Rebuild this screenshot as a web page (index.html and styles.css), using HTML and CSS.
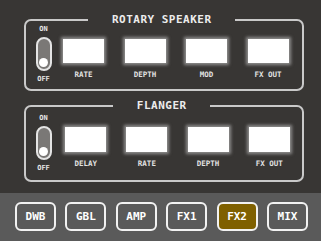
FILE: index.html
```html
<!DOCTYPE html>
<html>
<head>
<meta charset="utf-8">
<link rel="stylesheet" href="styles.css">
</head>
<body>
<div class="app">
  <main class="fx">
    <fieldset class="panel">
      <legend class="title">ROTARY SPEAKER</legend>
      <div class="row">
        <div class="switch">
          <span class="sw-label">ON</span>
          <div class="pill"><i class="knob"></i></div>
          <span class="sw-label">OFF</span>
        </div>
        <div class="ctl"><div class="lcd"></div><span class="lbl">RATE</span></div>
        <div class="ctl"><div class="lcd"></div><span class="lbl">DEPTH</span></div>
        <div class="ctl"><div class="lcd"></div><span class="lbl">MOD</span></div>
        <div class="ctl"><div class="lcd"></div><span class="lbl">FX OUT</span></div>
      </div>
    </fieldset>
    <fieldset class="panel panel-b">
      <legend class="title">FLANGER</legend>
      <div class="row row-b">
        <div class="switch">
          <span class="sw-label">ON</span>
          <div class="pill"><i class="knob"></i></div>
          <span class="sw-label">OFF</span>
        </div>
        <div class="ctl"><div class="lcd"></div><span class="lbl">DELAY</span></div>
        <div class="ctl"><div class="lcd"></div><span class="lbl">RATE</span></div>
        <div class="ctl"><div class="lcd"></div><span class="lbl">DEPTH</span></div>
        <div class="ctl"><div class="lcd"></div><span class="lbl">FX OUT</span></div>
      </div>
    </fieldset>
  </main>
  <nav class="tabs">
    <button class="tab">DWB</button>
    <button class="tab">GBL</button>
    <button class="tab">AMP</button>
    <button class="tab">FX1</button>
    <button class="tab active">FX2</button>
    <button class="tab">MIX</button>
  </nav>
</div>
</body>
</html>
```
FILE: styles.css
```css
* { box-sizing: border-box; }
html, body { margin: 0; padding: 0; }
body {
  width: 321px;
  height: 241px;
  overflow: hidden;
  background: #383634;
  font-family: "DejaVu Sans Mono", "Liberation Mono", monospace;
  font-weight: bold;
  color: #e6e6e6;
}
.app {
  display: flex;
  flex-direction: column;
  height: 241px;
}
.fx {
  height: 193px;
  padding-top: 14px;
  padding-left: 24px;
  display: flex;
  flex-direction: column;
  gap: 9px;
}
.panel {
  width: 280px;
  margin: 0;
  padding: 0 12px 6px 7px;
  border: 2px solid #c9c9c9;
  border-radius: 7px;
  min-width: 0;
}
.panel-b { padding-top: 3px; padding-bottom: 8px; }
.title {
  margin-inline: auto;
  padding: 0 23px 0 23.5px;
  font-size: 11px;
  line-height: 12px;
  letter-spacing: 0.5px;
  color: #ececec;
}
.row {
  display: flex;
  align-items: flex-start;
  gap: 20.5px;
}
.switch {
  width: 21px;
  flex-shrink: 0;
  margin-right: -11.5px;
  display: flex;
  flex-direction: column;
  align-items: center;
}
.row-b .switch { margin-right: -9px; }
.row-b { gap: 20.2px; }
.sw-label {
  font-size: 7px;
  line-height: 7px;
  color: #e6e6e6;
}
.sw-label:last-child { margin-top: 4px; line-height: 8px; }
.pill {
  width: 16px;
  height: 34px;
  margin-top: 4px;
  border: 2px solid #e4e4e4;
  border-radius: 8px;
  background: #7a7876;
  display: flex;
  flex-direction: column;
  justify-content: flex-end;
  align-items: center;
  padding-bottom: 2px;
}
.knob {
  display: block;
  width: 9px;
  height: 9px;
  border-radius: 50%;
  background: #ffffff;
}
.ctl {
  width: 41px;
  flex-shrink: 0;
  padding-top: 13px;
  display: flex;
  flex-direction: column;
  align-items: center;
}
.row-b .ctl { padding-top: 12px; }
.row-b .lcd { height: 25px; }
.lcd {
  width: 41px;
  height: 24px;
  background: #ffffff;
  box-shadow: 0 0 3px 2px rgba(215, 215, 215, 0.55);
}
.lbl {
  margin-top: 8px;
  font-size: 7.5px;
  line-height: 8px;
  color: #e2e2e2;
  white-space: pre;
}
.tabs {
  flex: 1;
  background: #5a5a5a;
  display: flex;
  align-items: flex-start;
  padding: 9px 0 0 15px;
  gap: 9.4px;
}
.tab {
  width: 41px;
  height: 29px;
  margin: 0;
  padding: 0;
  border: 2px solid #f2f2f2;
  border-radius: 6px;
  background: transparent;
  color: #ffffff;
  font-family: "DejaVu Sans Mono", "Liberation Mono", monospace;
  font-weight: bold;
  font-size: 11px;
}
.tab.active { background: #7f6000; }
```
